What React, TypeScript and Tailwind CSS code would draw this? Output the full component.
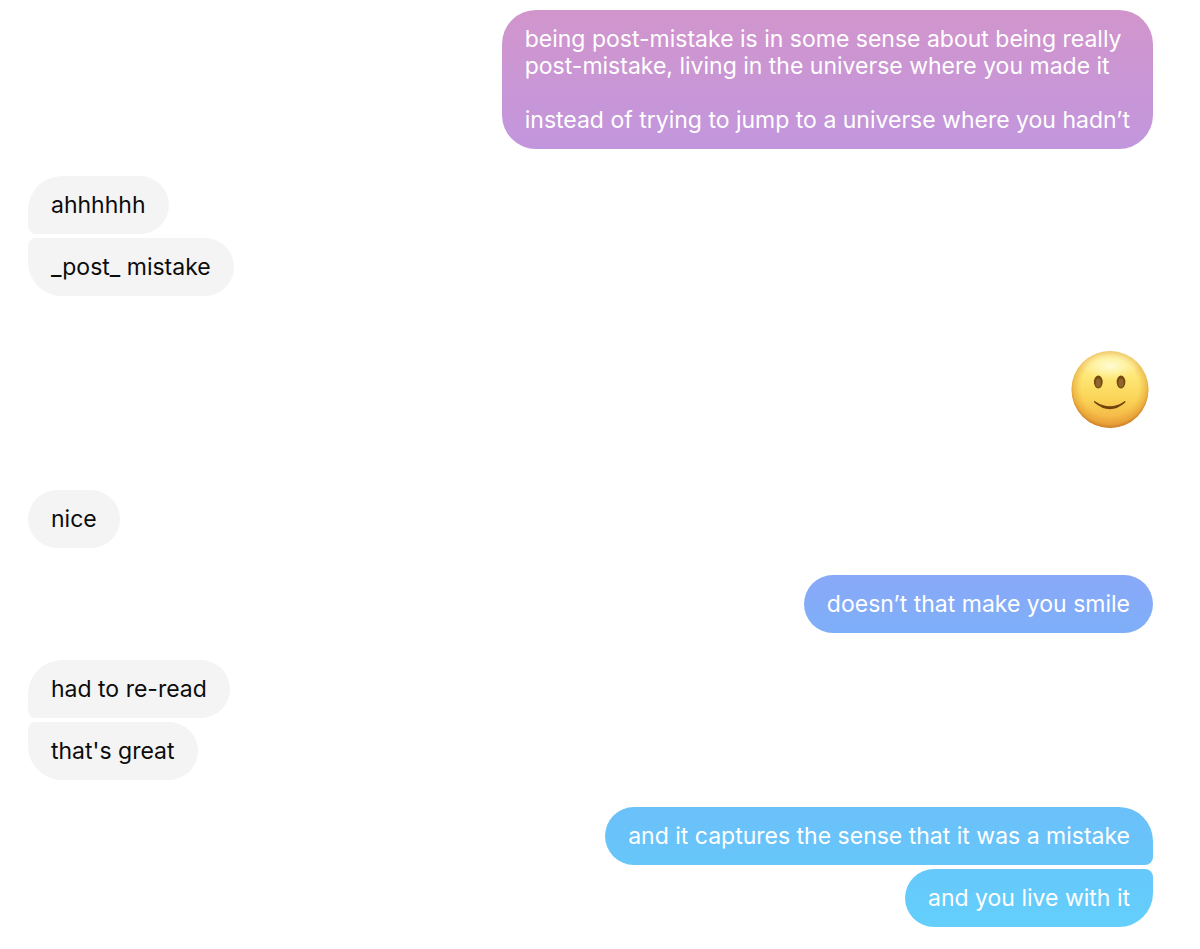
import React from 'react';
import clsx from 'clsx';

interface Message {
    text: string;
    tone?: string;
}

interface MessageGroup {
    from: 'me' | 'them';
    emoji?: boolean;
    messages: Message[];
}

const groups: MessageGroup[] = [
    {
        from: 'me',
        messages: [
            {
                text: 'being post-mistake is in some sense about being really\npost-mistake, living in the universe where you made it\n\ninstead of trying to jump to a universe where you hadn’t',
                tone: 'from-[#d195cc] to-[#c296dd]',
            },
        ],
    },
    { from: 'them', messages: [{ text: 'ahhhhhh' }, { text: '_post_ mistake' }] },
    { from: 'me', emoji: true, messages: [] },
    { from: 'them', messages: [{ text: 'nice' }] },
    { from: 'me', messages: [{ text: 'doesn’t that make you smile', tone: 'from-[#89a8f8] to-[#7eaff9]' }] },
    { from: 'them', messages: [{ text: 'had to re-read' }, { text: "that's great" }] },
    {
        from: 'me',
        messages: [
            { text: 'and it captures the sense that it was a mistake', tone: 'from-[#6bc0f9] to-[#67c6fa]' },
            { text: 'and you live with it', tone: 'from-[#66c8fb] to-[#63cffc]' },
        ],
    },
];

const SmileEmoji: React.FC = () => (
    <svg viewBox="0 0 78 78" className="w-[78px] h-[78px]" role="img" aria-label="Slightly smiling face">
        <defs>
            <linearGradient id="face" x1="0" y1="0" x2="0" y2="1">
                <stop offset="0" stopColor="#fdf0a0" />
                <stop offset="0.35" stopColor="#fde673" />
                <stop offset="0.65" stopColor="#fad255" />
                <stop offset="1" stopColor="#f0a93e" />
            </linearGradient>
            <radialGradient id="rim" cx="0.5" cy="0.47" r="0.53">
                <stop offset="0.7" stopColor="#e39a30" stopOpacity="0" />
                <stop offset="0.9" stopColor="#dd8f2c" stopOpacity="0.45" />
                <stop offset="1" stopColor="#c27224" stopOpacity="0.85" />
            </radialGradient>
            <radialGradient id="shine">
                <stop offset="0" stopColor="#fffde0" stopOpacity="0.9" />
                <stop offset="0.5" stopColor="#fffac0" stopOpacity="0.55" />
                <stop offset="1" stopColor="#fff3a0" stopOpacity="0" />
            </radialGradient>
        </defs>
        <circle cx="39" cy="38.5" r="38.5" fill="url(#face)" />
        <circle cx="39" cy="38.5" r="38.5" fill="url(#rim)" />
        <ellipse cx="39" cy="15" rx="30" ry="14" fill="url(#shine)" />
        <ellipse cx="27.3" cy="31" rx="4.4" ry="6.5" fill="#76490c" />
        <ellipse cx="50" cy="31" rx="4.4" ry="6.5" fill="#76490c" />
        <ellipse cx="27.3" cy="32" rx="2.6" ry="4.4" fill="#8f6530" />
        <ellipse cx="50" cy="32" rx="2.6" ry="4.4" fill="#8f6530" />
        <path d="M24 50.2 Q39 60.5 53.5 50.2 C54.4 49.8 54.8 50.8 54.2 51.5 Q39 65 23.3 51.5 C22.7 50.8 23.1 49.8 24 50.2Z" fill="#6f4309" />
    </svg>
);

const Bubble: React.FC<{ message: Message; mine: boolean; first: boolean; last: boolean }> = ({ message, mine, first, last }) => (
    <li
        className={clsx(
            'max-w-2xl px-[23px] pt-4 pb-[15px] text-[23px] leading-[27px] whitespace-pre-line',
            message.text.includes('\n') ? 'rounded-[34px]' : 'rounded-[29px]',
            mine ? 'bg-linear-to-b text-white' : 'bg-[#f4f4f4] text-[#0c0c0c]',
            message.tone,
            !first && (mine ? 'rounded-tr-lg rounded-br-[34px]' : 'rounded-tl-lg rounded-bl-[34px]'),
            !last && (mine ? 'rounded-br-lg rounded-tr-[34px]' : 'rounded-bl-lg rounded-tl-[34px]')
        )}
    >
        {message.text}
    </li>
);

export default function App() {
    return (
        <main className="min-h-screen bg-white pt-[10px] pb-5 pl-7 pr-[47px] flex flex-col gap-[27px] font-['Inter',sans-serif]">
            {groups.map((group, i) => {
                const mine = group.from === 'me';
                if (group.emoji) {
                    return (
                        <div key={i} className="flex justify-end pt-7 pb-[34px] pr-1">
                            <SmileEmoji />
                        </div>
                    );
                }
                return (
                    <ul key={i} className={clsx('flex flex-col gap-1', mine ? 'items-end' : 'items-start')}>
                        {group.messages.map((message, j) => (
                            <Bubble
                                key={message.text}
                                message={message}
                                mine={mine}
                                first={j === 0}
                                last={j === group.messages.length - 1}
                            />
                        ))}
                    </ul>
                );
            })}
        </main>
    );
}
